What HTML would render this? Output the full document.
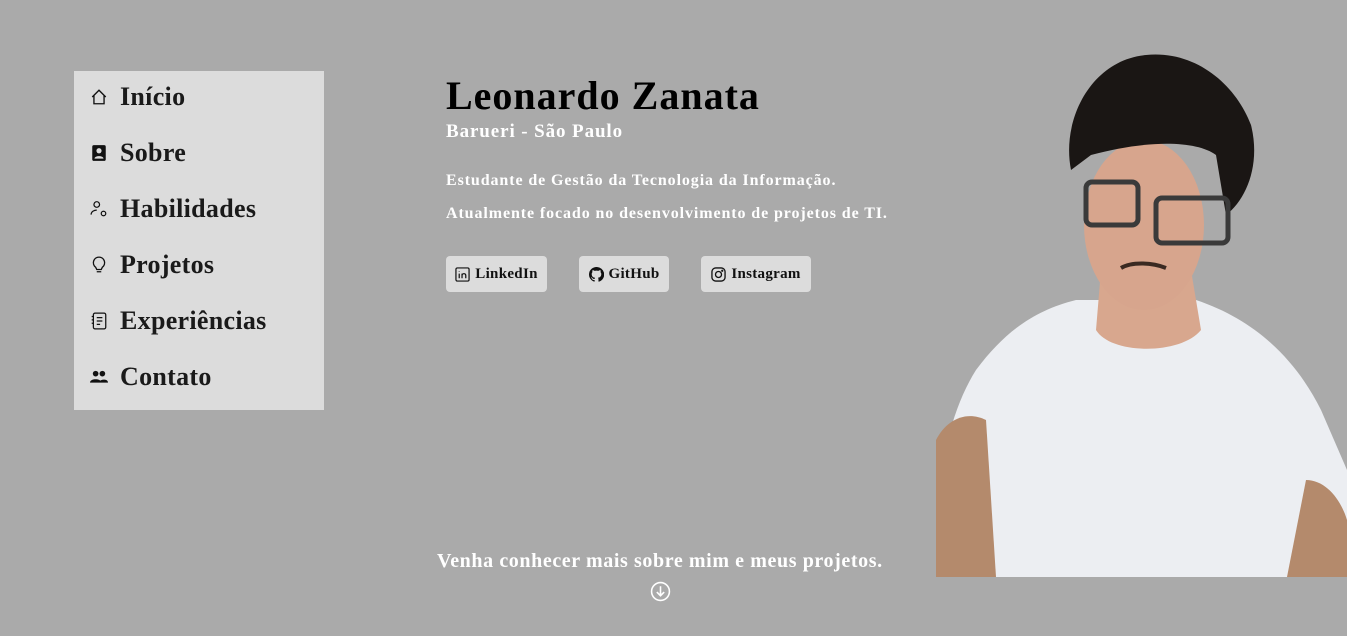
<!DOCTYPE html>
<html><head><meta charset="utf-8"><style>
*{margin:0;padding:0;box-sizing:border-box}
body{width:1347px;height:636px;background:#aaaaaa;font-family:"Liberation Serif",serif;font-weight:bold;position:relative;overflow:hidden}
.nav{position:absolute;left:74px;top:71px;width:250px;height:339px;background:#dcdcdc}
.nav div{position:absolute;left:16px;height:30px;display:flex;align-items:center;font-size:26px;color:#1a1a1a;letter-spacing:0.3px}
.nav svg{width:18px;height:18px;margin-right:12px}
h1{position:absolute;left:446px;top:72px;font-size:40px;color:#000;letter-spacing:1px}
.loc{position:absolute;left:446px;top:121px;font-size:19px;color:#fff;letter-spacing:0.9px}
.p{position:absolute;left:446px;font-size:16px;color:#fff;letter-spacing:0.9px}
.btn{position:absolute;top:256px;height:36px;background:#dcdcdc;border-radius:4px;display:flex;align-items:center;justify-content:center;font-size:15px;color:#111;letter-spacing:0.3px}
.btn svg{width:15px;height:15px;margin-right:5px}
.foot{position:absolute;left:437px;top:550px;font-size:20px;color:#fff;letter-spacing:0.6px}
</style></head><body>
<div class="nav">
<div style="top:11px"><svg viewBox="0 0 16 16" fill="none" stroke="#111" stroke-width="1.2"><path d="M2 8L8 2l6 6M3.5 6.5V14h9V6.5"/></svg>Início</div>
<div style="top:67px"><svg viewBox="0 0 16 16"><rect x="2" y="1" width="12" height="14" rx="1.5" fill="#111"/><circle cx="8" cy="6" r="2.3" fill="#dcdcdc"/><path d="M4 13c0-3 8-3 8 0z" fill="#dcdcdc"/></svg>Sobre</div>
<div style="top:123px"><svg viewBox="0 0 16 16" fill="none" stroke="#111" stroke-width="1.1"><circle cx="6" cy="4" r="2.5"/><path d="M1 13c0-3 3-4 5-4"/><circle cx="12" cy="12" r="2"/></svg>Habilidades</div>
<div style="top:179px"><svg viewBox="0 0 16 16" fill="none" stroke="#111" stroke-width="1.2"><path d="M8 1a5 5 0 0 0-3 9l1 2h4l1-2a5 5 0 0 0-3-9zM6 14h4"/></svg>Projetos</div>
<div style="top:235px"><svg viewBox="0 0 16 16" fill="none" stroke="#111" stroke-width="1.1"><rect x="3" y="1" width="11" height="14" rx="1.5"/><path d="M6 5h5M6 8h5M6 11h3M1.5 4h2M1.5 7h2M1.5 10h2"/></svg>Experiências</div>
<div style="top:291px"><svg viewBox="0 0 16 16" fill="#111"><circle cx="5" cy="5" r="2.5"/><circle cx="11" cy="5" r="2.5"/><path d="M0 13c0-4 10-4 10 0zM8 13c0-3 8-4 8 0z"/></svg>Contato</div>
</div>
<h1>Leonardo Zanata</h1>
<div class="loc">Barueri - São Paulo</div>
<div class="p" style="top:172px">Estudante de Gestão da Tecnologia da Informação.</div>
<div class="p" style="top:205px">Atualmente focado no desenvolvimento de projetos de TI.</div>
<div class="btn" style="left:446px;width:101px"><svg viewBox="0 0 16 16" fill="none" stroke="#111" stroke-width="1.3"><rect x="1" y="1" width="14" height="14" rx="1.5"/><path d="M4.5 7v5M4.5 4.5v.5M7.5 12V7M7.5 9c0-2.5 4-2.5 4 0v3"/></svg>LinkedIn</div>
<div class="btn" style="left:579px;width:90px"><svg viewBox="0 0 16 16" fill="#111"><path d="M8 0a8 8 0 0 0-2.5 15.6c.4 0 .5-.2.5-.4v-1.4c-2.2.5-2.7-1-2.7-1-.4-.9-.9-1.2-.9-1.2-.7-.5.1-.5.1-.5.8.1 1.2.8 1.2.8.7 1.2 1.900.9 2.300.7.1-.5.3-.9.5-1.1-1.8-.2-3.6-.9-3.6-4 0-.9.3-1.6.8-2.100-.1-.2-.4-1 .1-2.100 0 0 .7-.2 2.200.8a7.5 7.5 0 0 1 4 0c1.5-1 2.200-.8 2.200-.8.4 1.100.2 1.900.1 2.100.5.6.8 1.300.8 2.100 0 3.100-1.900 3.800-3.600 4 .3.3.6.8.6 1.500v2.200c0 .2.1.5.6.4A8 8 0 0 0 8 0z"/></svg>GitHub</div>
<div class="btn" style="left:701px;width:110px"><svg viewBox="0 0 16 16" fill="none" stroke="#111" stroke-width="1.4"><rect x="1" y="1" width="14" height="14" rx="4"/><circle cx="8" cy="8" r="3.2"/><circle cx="12" cy="4" r=".5" fill="#111"/></svg>Instagram</div>
<div class="foot">Venha conhecer mais sobre mim e meus projetos.</div>
<svg style="position:absolute;left:650px;top:581px" width="21" height="21" viewBox="0 0 20 20" fill="none" stroke="#fff" stroke-width="1.5"><circle cx="10" cy="10" r="8.5"/><path d="M10 5v9M6.5 10.5L10 14l3.5-3.5"/></svg>
<svg style="position:absolute;left:936px;top:40px" width="411" height="537" viewBox="0 0 411 537">
<path d="M0 537V480c5-60 15-110 40-150 30-40 60-60 100-70h120c60 20 100 60 125 110l26 60v107z" fill="#eceef2"/>
<path d="M0 400c10-20 30-30 50-20l10 157H0z" fill="#b48a6c"/>
<path d="M370 440c20 0 35 20 41 40v57h-60z" fill="#b48a6c"/>
<path d="M165 230h90l10 60c-20 25-90 25-105 0z" fill="#d8a78e"/>
<ellipse cx="208" cy="185" rx="60" ry="85" fill="#d7a58d"/>
<path d="M135 130c-10-50 20-110 75-115 50-5 90 30 105 70 10 40-5 75-25 90l-10-60c-20-15-70-15-125 0z" fill="#1a1614"/>
<rect x="150" y="142" width="52" height="43" rx="6" fill="none" stroke="#3a3a3a" stroke-width="5"/>
<rect x="220" y="158" width="72" height="45" rx="6" fill="none" stroke="#3a3a3a" stroke-width="5"/>
<path d="M185 228c10-6 30-6 45 0" stroke="#3a2a22" stroke-width="4" fill="none"/>
</svg>
</body></html>
